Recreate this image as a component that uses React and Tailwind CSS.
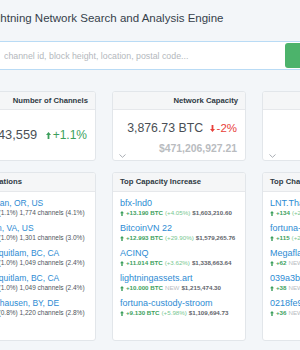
import React from "react";

const locations = [
  { name: "Boardman, OR, US", sub: "87 nodes (1.1%) 1,774 channels (4.1%)" },
  { name: "Ashburn, VA, US", sub: "80 nodes (1.0%) 1,301 channels (3.0%)" },
  { name: "Port Coquitlam, BC, CA", sub: "79 nodes (1.0%) 1,049 channels (2.4%)" },
  { name: "Port Coquitlam, BC, CA", sub: "79 nodes (1.0%) 1,049 channels (2.4%)" },
  { name: "Gunzenhausen, BY, DE", sub: "61 nodes (0.8%) 1,220 channels (2.8%)" },
];

const capacity = [
  { name: "bfx-lnd0", btc: "+13.190 BTC", pct: "(+4.05%)", usd: "$1,603,210.60" },
  { name: "BitcoinVN 22", btc: "+12.993 BTC", pct: "(+29.90%)", usd: "$1,579,265.76" },
  { name: "ACINQ", btc: "+11.014 BTC", pct: "(+3.62%)", usd: "$1,338,663.64" },
  { name: "lightningassets.art", btc: "+10.000 BTC", pct: "NEW", usd: "$1,215,474.30" },
  { name: "fortuna-custody-stroom", btc: "+9.130 BTC", pct: "(+5.98%)", usd: "$1,109,694.73" },
];

const channels = [
  { name: "LNT.Thailand", n: "+134", pct: "(+20.24%)" },
  { name: "fortuna-custody-stroom", n: "+115", pct: "(+27.51%)" },
  { name: "Megaflare", n: "+62", pct: "NEW" },
  { name: "039a3b0c5f9e1a2b", n: "+38", pct: "NEW" },
  { name: "0218fe97c2a0d1e4", n: "+36", pct: "NEW" },
];

const Arrow = ({ down, color }) => (
  <svg
    width="5"
    height="9"
    viewBox="0 0 10 14"
    className={down ? "rotate-180 mr-[1.5px]" : "mr-[1.5px]"}
    fill={color}
  >
    <path d="M5 0 L10 6 H6.8 V14 H3.2 V6 H0 Z" />
  </svg>
);

const SmallArrow = () => (
  <svg width="4" height="5" viewBox="0 0 10 12" fill="#3c9f5c">
    <path d="M5 0 L10 5.5 H6.8 V12 H3.2 V5.5 H0 Z" />
  </svg>
);

const Chevron = () => (
  <svg width="7" height="4" viewBox="0 0 7 4" fill="none" stroke="#a9adb3" strokeWidth="1">
    <path d="M0.5 0.5 L3.5 3.3 L6.5 0.5" />
  </svg>
);

const Card = ({ title, right, children, className }) => (
  <div
    className={
      "w-[134px] shrink-0 bg-white border border-[#e2e6ea] rounded-[3px] flex flex-col overflow-hidden " +
      className
    }
  >
    <div
      className={
        "bg-[#f5f6f7] border-b border-[#e6e8eb] flex items-center px-[7px] text-[7.7px] font-bold text-[#2f3a44] whitespace-nowrap " +
        (right ? "justify-end h-[18px]" : "justify-start h-[19px]")
      }
    >
      {title}
    </div>
    {children}
  </div>
);

export default function App() {
  return (
    <div
      className="w-[300px] h-[350px] overflow-hidden bg-[#f3f6f9]"
      style={{ fontFamily: '"Liberation Sans", Arial, sans-serif' }}
    >
      <div className="w-[434px] ml-[-38px]">
        <div className="pt-[11px] pl-[23px] h-[41px] text-[11.5px] leading-[14px] text-[#36414b] whitespace-nowrap">
          Lightning Network Search and Analysis Engine
        </div>

        <div className="w-[390px] h-[29px] border border-[#b9dbf5] bg-white flex items-center pr-[2px]">
          <input
            className="flex-1 h-full pl-[41px] text-[8.8px] outline-none bg-transparent placeholder:text-[#b4b8bd]"
            placeholder="channel id, block height, location, postal code..."
          />
          <button className="w-[64px] h-[25px] bg-[#4cb36b] rounded-[3px] text-white text-[9px]">
            Search
          </button>
        </div>

        <div className="flex gap-[16px] mt-[21px]">
          <Card title="Number of Channels" right className="h-[70px]">
            <div className="flex-1 relative">
              <div className="flex items-center justify-end pr-[8px] pt-[17px] h-[33px]">
                <span className="text-[12.8px] leading-[16px] text-[#4a4f55] mr-[9px]">43,559</span>
                <Arrow color="#3c9f5c" />
                <span className="text-[12px] leading-[16px] text-[#3c9f5c]">+1.1%</span>
              </div>
              <div className="absolute left-[6px] bottom-[2px]">
                <Chevron />
              </div>
            </div>
          </Card>
          <Card title="Network Capacity" right className="h-[70px]">
            <div className="flex-1 relative">
              <div className="flex items-center justify-end pr-[8px] pt-[10px]">
                <span className="text-[12.3px] leading-[16px] text-[#4a4f55] mr-[7px]">3,876.73 BTC</span>
                <Arrow down color="#e8403a" />
                <span className="text-[11.5px] leading-[16px] text-[#e8403a]">-2%</span>
              </div>
              <div className="text-right pr-[8px] mt-[6px] text-[10.4px] leading-[13px] font-bold text-[#b9bcbf]">
                $471,206,927.21
              </div>
              <div className="absolute left-[6px] bottom-[2px]">
                <Chevron />
              </div>
            </div>
          </Card>
          <Card title="Nodes per ISP" right className="h-[70px]">
            <div className="flex-1 relative">
              <div className="absolute left-[6px] bottom-[2px]">
                <Chevron />
              </div>
            </div>
          </Card>
        </div>

        <div className="flex gap-[16px] mt-[11px]">
          <Card title="Top Locations" className="h-[169px]">
            <div className="px-[7px] pt-[6px] flex flex-col gap-[6px]">
              {locations.map((l, i) => (
                <div key={i} className="whitespace-nowrap">
                  <div className="text-[8.5px] leading-[11px] text-[#2d8bd3]">{l.name}</div>
                  <div className="text-[6.5px] leading-[8px] text-[#50565d]">{l.sub}</div>
                </div>
              ))}
            </div>
          </Card>
          <Card title="Top Capacity Increase" className="h-[169px]">
            <div className="px-[7px] pt-[6px] flex flex-col gap-[6px]">
              {capacity.map((c, i) => (
                <div key={i} className="whitespace-nowrap">
                  <div className="text-[9px] leading-[11px] text-[#2d8bd3]">{c.name}</div>
                  <div className="flex items-center gap-[2px] text-[6.2px] leading-[8px]">
                    <SmallArrow />
                    <span className="text-[#3c9f5c] font-bold">{c.btc}</span>
                    <span className={c.pct === "NEW" ? "text-[#b9bcbf]" : "text-[#78c78f]"}>{c.pct}</span>
                    <span className="text-[#5f646b] font-bold">{c.usd}</span>
                  </div>
                </div>
              ))}
            </div>
          </Card>
          <Card title="Top Channel Increase" className="h-[169px]">
            <div className="px-[7px] pt-[6px] flex flex-col gap-[6px]">
              {channels.map((c, i) => (
                <div key={i} className="whitespace-nowrap">
                  <div className="text-[9px] leading-[11px] text-[#2d8bd3]">{c.name}</div>
                  <div className="flex items-center gap-[2px] text-[6.2px] leading-[8px]">
                    <SmallArrow />
                    <span className="text-[#3c9f5c] font-bold">{c.n}</span>
                    <span className={c.pct === "NEW" ? "text-[#b9bcbf]" : "text-[#78c78f]"}>{c.pct}</span>
                  </div>
                </div>
              ))}
            </div>
          </Card>
        </div>
      </div>
    </div>
  );
}
